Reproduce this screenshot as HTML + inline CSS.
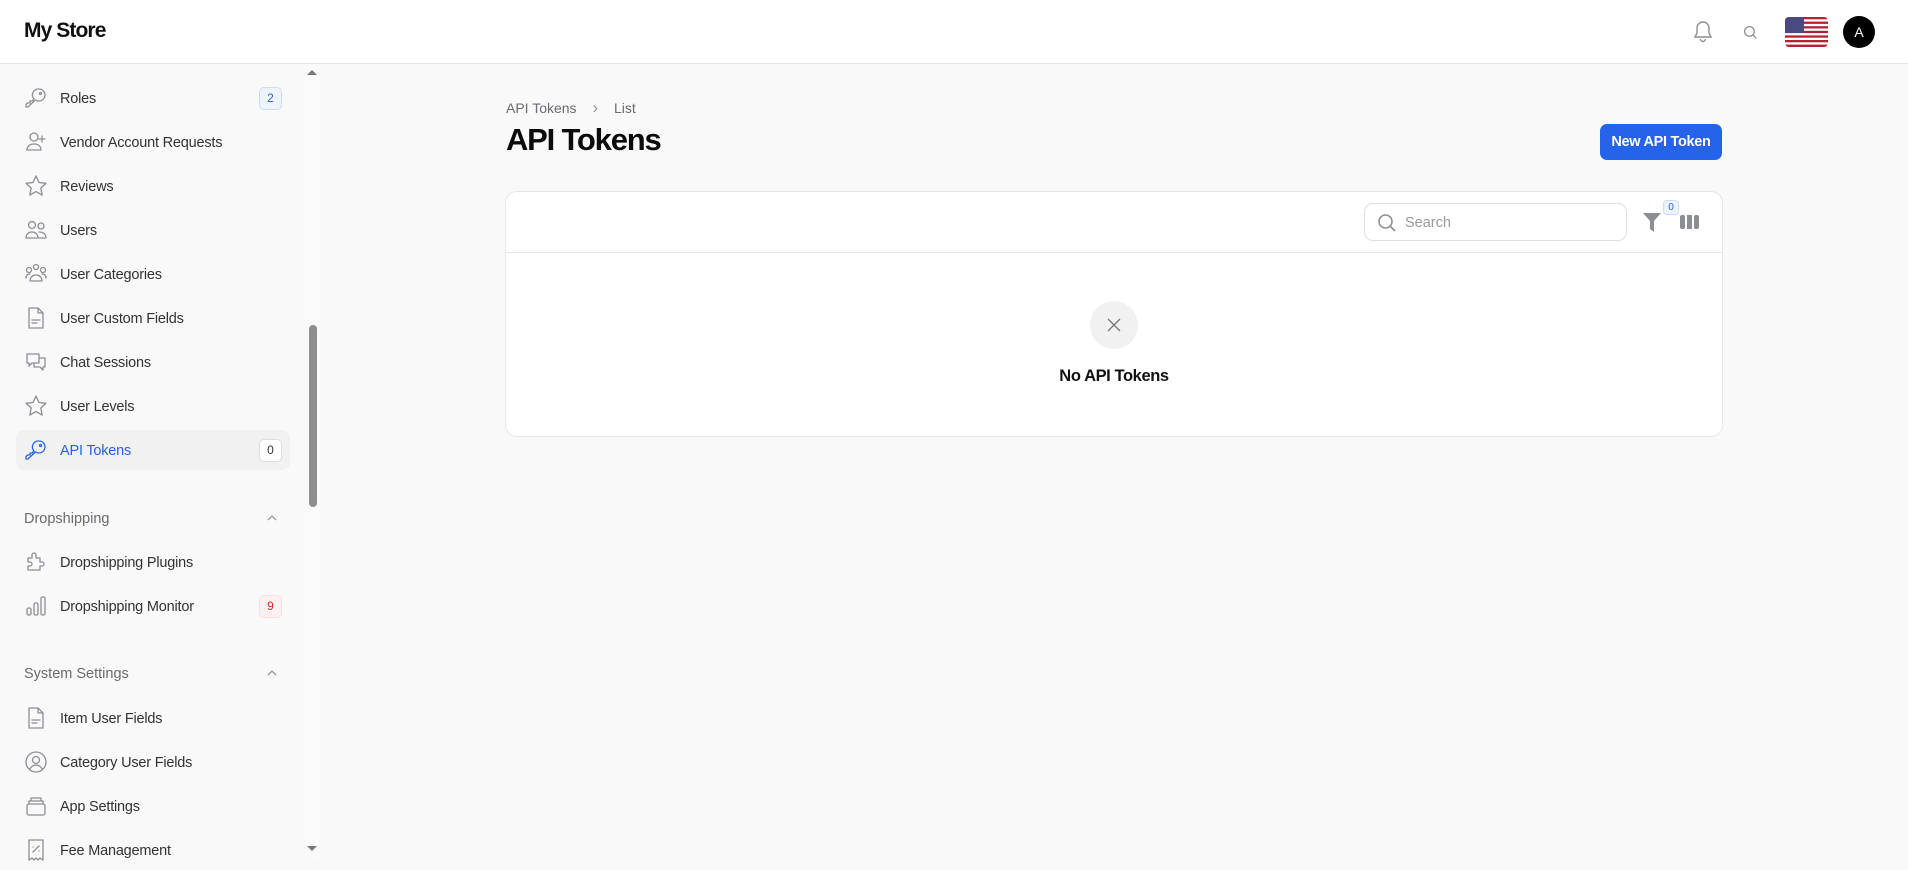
<!DOCTYPE html>
<html><head><meta charset="utf-8"><style>
*{box-sizing:border-box;margin:0;padding:0}
body{width:1908px;height:860px;overflow:hidden;background:#f9f9f9;font-family:"Liberation Sans",sans-serif;position:relative;color:#222}
.hdr{position:absolute;left:0;top:0;width:1908px;height:64px;background:#fff;border-bottom:1px solid #e4e4e4}
.logo{position:absolute;left:24px;top:19px;font-size:21px;font-weight:bold;letter-spacing:-0.9px;color:#111}
.side{position:absolute;left:0;top:64px;width:305px;height:796px;background:#f9f9f9}
.track{position:absolute;left:305px;top:64px;width:15px;height:796px;background:#fafafa}
.thumb{position:absolute;left:309px;top:325px;width:8px;height:182px;background:#8e8e8e;border-radius:4px}
.item{position:absolute;left:16px;width:274px;height:40px;font-size:14.5px;color:#333}
.item svg{position:absolute;left:8px;top:8px;width:24px;height:24px;fill:none;stroke:#8d8d94;stroke-width:1.3;stroke-linecap:round;stroke-linejoin:round}
.item span{position:absolute;left:44px;top:13px;letter-spacing:-0.2px}
.item.act{background:#f1f1f1;border-radius:8px}
.item.act span{color:#2563eb}
.item.act svg{stroke:#2563eb}
.badge{position:absolute;right:8px;top:9px;min-width:23px;height:23px;border-radius:5px;font-size:12px;text-align:center;line-height:21px;border:1px solid}
.sec{position:absolute;left:24px;font-size:14.5px;color:#6b6b70}
.chev{position:absolute;left:266px;width:12px;height:12px}
.main h1{position:absolute;left:506px;top:122px;font-size:31px;font-weight:bold;letter-spacing:-1.2px;color:#0b0b0b}
.bc{position:absolute;left:506px;top:98px;font-size:14px;color:#6b6b70}
.btn{position:absolute;left:1600px;top:124px;width:122px;height:36px;background:#2563eb;border-radius:7px;color:#fff;font-weight:bold;font-size:14.5px;text-align:center;line-height:36px;letter-spacing:-0.3px}
.card{position:absolute;left:505px;top:191px;width:1218px;height:246px;background:#fff;border:1px solid #e6e6e6;border-radius:12px}
.line{position:absolute;left:0;top:60px;width:100%;height:1px;background:#e6e6e6}
.search{position:absolute;left:858px;top:11px;width:263px;height:38px;border:1px solid #dedede;border-radius:9px}
.search span{position:absolute;left:40px;top:11px;font-size:14.5px;color:#9a9aa0}
.circ{position:absolute;left:584px;top:109px;width:48px;height:48px;border-radius:50%;background:#f1f1f1}
.empty{position:absolute;left:0;width:100%;top:175px;text-align:center;font-weight:bold;font-size:16.5px;color:#111;letter-spacing:-0.4px}
</style></head><body>
<div class="hdr"><div class="logo">My Store</div>
<svg style="position:absolute;left:1693px;top:20px" width="20" height="24" viewBox="0 0 20 24" fill="none" stroke="#8d8d94" stroke-width="1.4"><path d="M10 2a6 6 0 0 0-6 6v5l-2 4h16l-2-4V8a6 6 0 0 0-6-6z"/><path d="M7.5 19a2.5 2.5 0 0 0 5 0"/></svg>
<svg style="position:absolute;left:1743px;top:25px" width="15" height="15" viewBox="0 0 14 14" fill="none" stroke="#8d8d94" stroke-width="1.2"><circle cx="6" cy="6" r="4.5"/><path d="M9.5 9.5l3 3"/></svg>
<svg style="position:absolute;left:1785px;top:17px" width="43" height="30" viewBox="0 0 43 30"><defs><clipPath id="c"><rect width="43" height="30" rx="4"/></clipPath></defs><g clip-path="url(#c)"><rect width="43" height="30" fill="#fff"/><g fill="#b22234"><rect y="0" width="43" height="2.3"/><rect y="4.6" width="43" height="2.3"/><rect y="9.2" width="43" height="2.3"/><rect y="13.8" width="43" height="2.3"/><rect y="18.4" width="43" height="2.3"/><rect y="23" width="43" height="2.3"/><rect y="27.6" width="43" height="2.4"/></g><rect width="19" height="16" fill="#4a4a80"/></g></svg>
<div style="position:absolute;left:1843px;top:16px;width:32px;height:32px;border-radius:50%;background:#000;color:#fff;font-size:14px;text-align:center;line-height:32px">A</div>
</div>
<div class="side">
<div class="item" style="top:14px"><svg viewBox="0 0 24 24"><path d="M15 3a6 6 0 1 1-3.5 10.9L4 21H2v-2.5l1.5-1.5H6v-2h2l2-2A6 6 0 0 1 15 3z"/><circle cx="16.5" cy="7.5" r="1"/></svg><span>Roles</span><div class="badge" style="background:#eef4ff;border-color:#c9dcff;color:#2563eb">2</div></div>
<div class="item" style="top:58px"><svg viewBox="0 0 24 24"><circle cx="10" cy="7" r="4"/><path d="M3 20c0-4 3-6 7-6s7 2 7 6zM18 6v6M15 9h6"/></svg><span>Vendor Account Requests</span></div>
<div class="item" style="top:102px"><svg viewBox="0 0 24 24"><path d="M12 2l3 6.5 7 .8-5.2 4.8 1.4 7L12 17.6 5.8 21l1.4-7L2 9.3l7-.8z"/></svg><span>Reviews</span></div>
<div class="item" style="top:146px"><svg viewBox="0 0 24 24"><circle cx="8" cy="7" r="3.5"/><circle cx="17" cy="8" r="3"/><path d="M2 20c0-4 3-6 6-6s6 2 6 6zM15 14c4 0 7 2 7 6h-7"/></svg><span>Users</span></div>
<div class="item" style="top:190px"><svg viewBox="0 0 24 24"><circle cx="12" cy="5" r="2.5"/><circle cx="5" cy="8" r="2.5"/><circle cx="19" cy="8" r="2.5"/><path d="M6 19c0-4 3-6 6-6s6 2 6 6zM2 16c0-2 1-4 4-4M22 16c0-2-1-4-4-4"/></svg><span>User Categories</span></div>
<div class="item" style="top:234px"><svg viewBox="0 0 24 24"><path d="M5 2h9l5 5v15H5zM14 2v5h5M8 14h8M8 17h5"/></svg><span>User Custom Fields</span></div>
<div class="item" style="top:278px"><svg viewBox="0 0 24 24"><path d="M3 4h12v9H8l-3 3v-3H3zM15 8h6v9h-2v3l-3-3h-6v-4"/></svg><span>Chat Sessions</span></div>
<div class="item" style="top:322px"><svg viewBox="0 0 24 24"><path d="M12 2l3 6.5 7 .8-5.2 4.8 1.4 7L12 17.6 5.8 21l1.4-7L2 9.3l7-.8z"/></svg><span>User Levels</span></div>
<div class="item act" style="top:366px"><svg viewBox="0 0 24 24"><path d="M15 3a6 6 0 1 1-3.5 10.9L4 21H2v-2.5l1.5-1.5H6v-2h2l2-2A6 6 0 0 1 15 3z"/><circle cx="16.5" cy="7.5" r="1"/></svg><span>API Tokens</span><div class="badge" style="background:#fff;border-color:#ddd;color:#333">0</div></div>
<div class="sec" style="top:447px">Dropshipping</div><svg class="chev" style="top:448px" viewBox="0 0 12 12" fill="none" stroke="#999" stroke-width="1.3"><path d="M2 8l4-4 4 4"/></svg>
<div class="item" style="top:478px"><svg viewBox="0 0 24 24"><path d="M4 8h4V5a2 2 0 0 1 4 0v3h4v4h2a2 2 0 0 1 0 4h-2v4H4v-4h2a2 2 0 0 0 0-4H4z"/></svg><span>Dropshipping Plugins</span></div>
<div class="item" style="top:522px"><svg viewBox="0 0 24 24"><rect x="3" y="14" width="4" height="7" rx="1.5"/><rect x="10" y="9" width="4" height="12" rx="1.5"/><rect x="17" y="3" width="4" height="18" rx="1.5"/></svg><span>Dropshipping Monitor</span><div class="badge" style="background:#fff1f1;border-color:#fdd;color:#e02424">9</div></div>
<div class="sec" style="top:602px">System Settings</div><svg class="chev" style="top:603px" viewBox="0 0 12 12" fill="none" stroke="#999" stroke-width="1.3"><path d="M2 8l4-4 4 4"/></svg>
<div class="item" style="top:634px"><svg viewBox="0 0 24 24"><path d="M5 2h9l5 5v15H5zM14 2v5h5M8 14h8M8 17h5"/></svg><span>Item User Fields</span></div>
<div class="item" style="top:678px"><svg viewBox="0 0 24 24"><circle cx="12" cy="12" r="10"/><circle cx="12" cy="10" r="3.5"/><path d="M6 19c1.5-3 3.5-4 6-4s4.5 1 6 4"/></svg><span>Category User Fields</span></div>
<div class="item" style="top:722px"><svg viewBox="0 0 24 24"><rect x="3" y="10" width="18" height="11" rx="2"/><path d="M5 10V7h14v3M7 7V4h10v3"/></svg><span>App Settings</span></div>
<div class="item" style="top:766px"><svg viewBox="0 0 24 24"><path d="M5 2h14v20l-3-2-2 2-2-2-2 2-2-2-3 2zM9 14l6-6M9 9h.1M15 13h.1"/></svg><span>Fee Management</span></div>
</div>
<div class="track"></div><div class="thumb"></div>
<svg style="position:absolute;left:307px;top:69px" width="10" height="6" viewBox="0 0 10 6"><path d="M0 6L5 1l5 5z" fill="#777"/></svg>
<svg style="position:absolute;left:307px;top:846px" width="10" height="6" viewBox="0 0 10 6"><path d="M0 0l5 5 5-5z" fill="#777"/></svg>
<div class="main">
<div class="bc">API Tokens <span style="margin:0 12px;color:#999;font-size:17px">&#8250;</span> List</div>
<h1>API Tokens</h1>
<div class="btn">New API Token</div>
<div class="card">
<div class="search"><svg style="position:absolute;left:12px;top:9px" width="20" height="20" viewBox="0 0 20 20" fill="none" stroke="#8d8d94" stroke-width="1.6"><circle cx="8.5" cy="8.5" r="6.5"/><path d="M13.5 13.5l4.5 4.5"/></svg><span>Search</span></div>
<svg style="position:absolute;left:1137px;top:21px" width="18" height="19" viewBox="0 0 18 19"><path d="M0 0h18l-7 8v11l-4-3V8z" fill="#8d8d94"/></svg>
<div style="position:absolute;left:1157px;top:8px;width:16px;height:15px;border-radius:4px;background:#eef4ff;border:1px solid #c9dcff;color:#2563eb;font-size:10px;text-align:center;line-height:13px">0</div>
<svg style="position:absolute;left:1174px;top:23px" width="19" height="14" viewBox="0 0 19 14" fill="#8d8d94"><rect x="0" y="0" width="5" height="14" rx="2"/><rect x="7" y="0" width="5" height="14"/><rect x="14" y="0" width="5" height="14" rx="2"/></svg>
<div class="line"></div>
<div class="circ"><svg style="position:absolute;left:16px;top:16px" width="16" height="16" viewBox="0 0 16 16" stroke="#777" stroke-width="1.3"><path d="M2 2l12 12M14 2L2 14"/></svg></div>
<div class="empty">No API Tokens</div>
</div>
</div>
</body></html>
